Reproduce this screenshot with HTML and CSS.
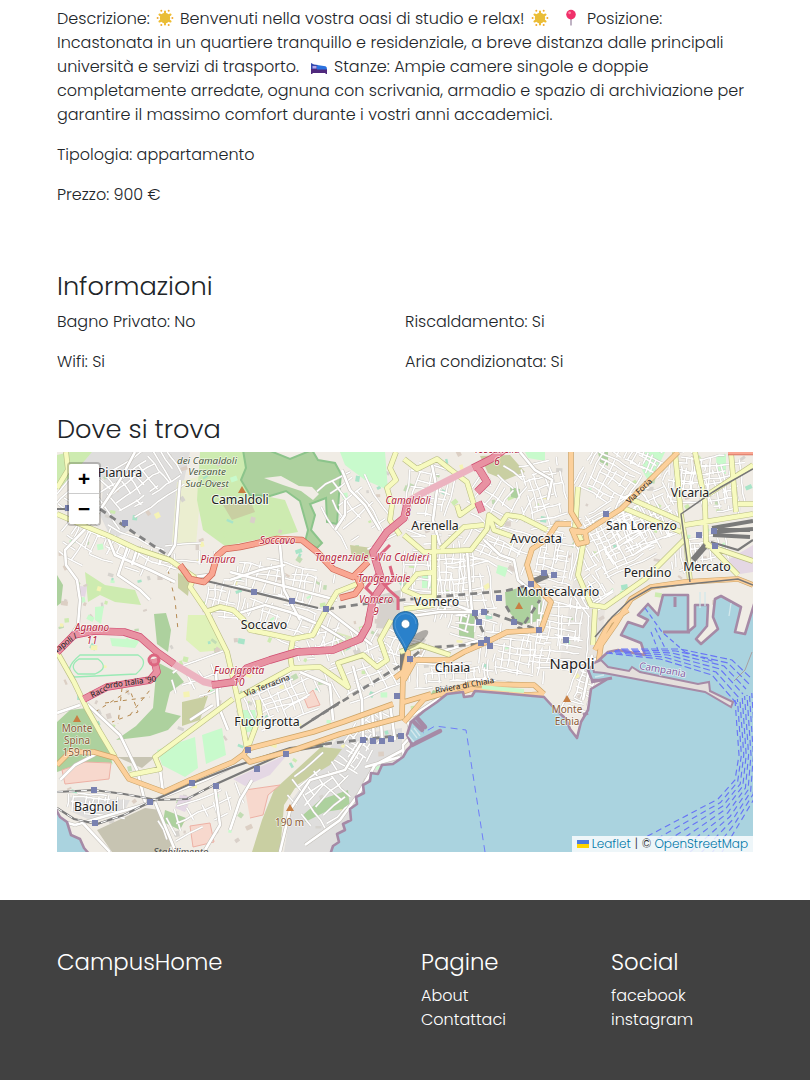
FILE: index.html
```
<!DOCTYPE html>
<html lang="it">
<head>
<meta charset="utf-8">
<title>CampusHome</title>
<link rel="stylesheet" href="styles.css">
</head>
<body>
<svg class="defs" width="0" height="0" aria-hidden="true">
  <symbol id="star" viewBox="0 0 18 18">
    <g stroke="#efbd32" stroke-width="2.1" stroke-linecap="round"><path d="M9 2.500v13M3.500 5.500l11 7M3.500 12.500l11-7"/></g>
    <g fill="#f0a92e"><circle cx="5.3" cy="1.8" r="1"/><circle cx="12.7" cy="1.8" r="1"/><circle cx="16.4" cy="9" r="1"/><circle cx="12.7" cy="16" r="1"/><circle cx="5.3" cy="16" r="1"/><circle cx="1.600" cy="9" r="1"/></g>
    <circle cx="9" cy="9" r="5.200" fill="#e9bd37"/>
  </symbol>
  <symbol id="pin" viewBox="0 0 18 18">
    <path d="M9 9v7.6" stroke="#9d8aa5" stroke-width="1.3"/><circle cx="9" cy="5.6" r="4.8" fill="#f0306a"/><circle cx="7.6" cy="3.8" r="1.4" fill="#ff85a5"/>
  </symbol>
  <symbol id="bed" viewBox="0 0 18 18">
    <path d="M1 6v11h1.5v-1h13v1H17v-5H1z" fill="#50297d"/><path d="M1 6l3 1.5L8 8v4H1z" fill="#3448ae"/><path d="M2.5 9h4v2.500h-4z" fill="#b9a9e8"/><path d="M7 8l8.500 1.200q1.500.3 1.500 3.300H7z" fill="#2b72df"/>
  </symbol>
</svg>
<main class="page">
  <section class="intro">
    <p class="text">
      <span class="line"><span class="t1">Descrizione:</span><svg class="emoji e1"><use href="#star"/></svg><span class="t2">Benvenuti nella vostra oasi di studio e relax!</span><svg class="emoji e2"><use href="#star"/></svg><svg class="emoji e3"><use href="#pin"/></svg><span>Posizione:</span></span>
      <span class="line">Incastonata in un quartiere tranquillo e residenziale, a breve distanza dalle principali</span>
      <span class="line"><span class="t5">università e servizi di trasporto.</span><svg class="emoji e4"><use href="#bed"/></svg><span>Stanze: Ampie camere singole e doppie</span></span>
      <span class="line">completamente arredate, ognuna con scrivania, armadio e spazio di archiviazione per</span>
      <span class="line">garantire il massimo comfort durante i vostri anni accademici.</span>
    </p>
    <p class="text">Tipologia: appartamento</p>
    <p class="text">Prezzo: 900 €</p>
  </section>
  <section class="info">
    <h3 class="title">Informazioni</h3>
    <div class="grid">
      <p class="text">Bagno Privato: No</p><p class="text">Riscaldamento: Si</p>
      <p class="text">Wifi: Si</p><p class="text">Aria condizionata: Si</p>
    </div>
  </section>
  <section>
    <h3 class="title where">Dove si trova</h3>
    <div class="map">
      <svg class="canvas" viewBox="57 452 696 400" width="696" height="400">
        <rect x="57" y="452" width="696" height="400" fill="#f0ece5"/>
        <!-- land use -->
        <g fill="#dfdedd">
          <path d="M92 452H190L180 500L170 556L130 530L112 540L100 515L104 480L80 462Z"/>
          <path d="M338 737L402 728V758L372 776L345 830L332 852H284L292 800Z"/>
          <path d="M68 797L130 800L124 812L95 822L72 812Z"/>
          <path d="M575 570L605 610L600 660L585 690L560 660Z" fill="#e8e4df"/>
          <path d="M380 595L400 590V630L376 628Z" fill="#d6d2cd"/>
        </g>
        <path fill="#ebeed0" d="M177 482L202 476L196 545L172 542Z"/>
        <path fill="#cdebb0" d="M200 452H245L250 493L285 500L298 532L275 536L225 546L203 530L197 500ZM85 572L105 585L135 590L141 605L115 602L100 595L88 602ZM57 455L70 452L92 452L68 480L57 490Z"/>
        <path fill="#dff2b9" d="M188 615L212 615L225 650L200 652L186 640Z"/>
        <g id="patches"></g>
        <g fill="#add19e">
          <path stroke="#8cc48b" stroke-width="2" d="M243 450L246 468L241 480L250 495L270 496L286 491L300 501L303 512L308 530L305 542L317 548L322 543L311 530L315 515L310 504L326 498L327 522L337 524L339 495L341 474L335 463L318 460L312 450L290 459L268 450Z"/>
          <path fill="#f0ece5" d="M264 478L281 476L299 486L312 487L319 494L313 500L301 491L283 485Z"/>
          <path d="M57 575L63 585L61 603L57 606ZM154 614L166 613L171 630L168 652L157 644ZM57 722L70 710L87 708L110 750L112 763L88 762L57 772ZM157 662L176 672L184 682L170 692L165 712L181 716L168 730L150 736L116 740L136 726L153 708ZM459 615L475 611L474 640L459 638ZM505 592L525 586L541 595L543 620L520 625L506 608ZM510 487L520 489L519 499L511 497ZM433 690L440 692L437 699L428 700ZM303 815L320 800L348 790L350 808L325 812L305 822ZM165 810L186 818L180 830L163 822ZM598 452H608V466L600 462Z"/>
        </g>
        <path fill="none" stroke="#b58a52" stroke-width="1" stroke-dasharray="4 5" d="M95 712L130 690L138 712L112 722M105 703L150 697M122 688L118 724M130 715L150 690M168 570L175 600L178 630M185 720L210 690"/>
        <path fill="#c9cfa2" d="M350 545L372 548L368 562L352 560ZM480 456L510 455L525 472L505 480L488 473ZM223 505L250 500L255 512L232 520ZM178 573L190 580L188 596L178 588ZM321 747L342 749L330 765L297 785L284 805L280 852H252L262 820L274 790ZM182 702L208 696L200 720L182 726Z"/>
        <path fill="#c8facc" d="M340 452H385L388 490L365 480L345 465ZM157 750L195 737L198 768L185 777L162 765ZM202 735L222 728L226 755L206 764ZM645 452L665 452L650 484L642 470ZM716 456L726 454L726 474L717 472ZM525 452H545V461L528 458ZM498 565L508 568L505 577L496 573ZM422 575H432V588H422ZM95 607L104 606L101 624L95 620ZM110 638L140 640L135 648L112 646ZM242 710L255 710L258 730L243 733Z"/>
        <path fill="none" stroke="#9aeab5" stroke-width="1.300" d="M80 655H138Q150 662 136 674L75 677Q62 670 80 655ZM79 659H98Q110 668 95 674H78Q68 666 79 659Z"/>
        <path fill="#f7d8cd" stroke="#edb1a5" d="M62 770L85 762L111 763L109 779L65 784ZM190 826L210 823L214 842L193 847ZM304 698L313 690L320 705L308 708ZM245 790L280 785L268 795L263 815L250 818"/>
        <path fill="#c7c4b2" d="M97 830L145 808L160 810L172 845L165 852H112ZM117 757L155 757L142 768Z"/>
        <path fill="#e4d7e4" d="M233 779L288 754L270 775L245 786ZM728 560L753 545V572L740 574ZM80 586L87 587L85 597L79 595ZM180 795L192 797L185 812L175 808Z"/>
        <path fill="#dce9bf" d="M330 630L356 638L342 655Z"/>
        <g id="streetCase" fill="none" stroke="#c6c3be" stroke-width="2.400"></g>
        <g id="streetFill" fill="none" stroke="#fff" stroke-width="1.600"></g>
        <!-- local roads -->
        <g fill="none" stroke="#c4c0ba" stroke-width="3.800" stroke-linejoin="round"><path id="loc" d="M87 527L65 550L66 565L77 580L80 600L78 625L68 640M87 527L100 510L120 480L135 452M107 535L115 555L150 570L175 582M128 546L118 575L140 590L150 600M137 549L132 565M166 560L175 545L180 480M194 577L215 574M280 545L284 590L300 620M285 565L260 570L230 580M230 572L337 600M233 615L265 605L290 612L320 625L345 640M327 610L372 645M432 465L437 490L433 520L440 545M467 550L472 612M484 540L500 555L514 560L518 580L530 590M450 603L474 612M404 617L440 612L478 612M480 640L440 652M216 673L218 705L228 730M213 705L190 720M300 672L330 685L333 720M353 666L362 700L363 740L345 770L310 780L290 810L280 852M403 750L375 765L358 795L340 820L305 845M400 757L365 767M390 705L395 740M380 707L382 737M372 710L374 738M57 713L80 705M87 704L120 735L137 770L145 802M75 825L140 806L207 779L235 765M80 820L110 852M155 802L175 850M160 769L163 792M215 788L220 825L205 850M57 820L75 825M100 752L75 765L60 780M252 780L240 800L230 830M575 665L610 655M592 655L583 700M404 765L403 745L412 735L408 722M435 712L410 728M441 697L412 716M342 470L350 490L365 505L380 530M345 500V515L335 530M520 452L535 470L552 480L548 500"/></g>
        <use href="#loc" fill="none" stroke="#fff" stroke-width="2.600"/>
        <!-- railways -->
        <g fill="none" stroke="#7a7a7a" stroke-width="2.200"><path d="M57 792L94 790L124 794L157 800L187 799L214 785L287 752L323 746M57 808L74 819L97 824L124 815L150 802L190 784L233 767L290 748L325 744M194 578L253 592L293 602L318 608M300 728L340 702M753 540L738 550L711 542M57 509H70"/><path stroke-width="6" d="M706 545L693 560M530 583L548 575M403 652V675"/><path d="M712 528L753 521M713 532L753 529M713 535L750 537M718 530H750" stroke-width="4"/></g>
        <g fill="none" stroke="#828282" stroke-width="2.800" stroke-dasharray="7 5"><path d="M100 509L130 530L170 557M327 609L370 603L434 597L505 591L530 585M325 744L403 735M312 720L406 662L424 648L481 644M482 610L510 620L539 630M475 615L487 640M506 606L520 630L540 600"/></g>
        <path fill="none" stroke="#fff" stroke-dasharray="6 6" d="M57 792L94 790L124 794L157 800L187 799L214 785M57 808L74 819L97 824L124 815L150 802"/>
        <!-- secondary roads -->
        <g fill="none" stroke="#b9bd84" stroke-width="5.600" stroke-linejoin="round"><path id="sec" d="M57 514L87 527L107 535L137 549L170 560L194 577L190 587L207 612L227 652L238 700L247 749M205 612L220 607L233 610L243 619L250 630L270 634L293 639L313 635L325 612L337 592L357 584L365 580M293 639L290 655L292 668M404 459L417 469L437 459L451 470L467 482L474 505L460 515L457 505M404 535L424 552L471 550L487 529L489 515L501 524L507 515L521 517L547 530M489 515L494 530L514 537M441 549L464 527L484 525M434 535V597L420 597L404 590L417 574L434 572M396 452L390 468L396 480L387 488L392 505L390 520L400 535M57 652L74 682L87 709L100 732L115 757M233 699L155 757L160 769L130 775M237 698L292 668L320 667L337 679L348 687L338 663L363 655L377 667L387 660L380 640L391 620M404 609L434 605M577 530L583 545L578 575L591 605L605 607L645 579L685 539L681 515L675 452M631 499L681 521M621 507L681 532M695 452L705 502L706 542L738 575M685 525L753 514M701 499L753 465M731 452L736 512M686 539L690 582M738 504H753M706 545L753 561M595 609L593 645M57 488L68 470L66 452M247 750L260 715L258 700M400 652L420 645L450 655M578 487L575 530"/></g>
        <use href="#sec" fill="none" stroke="#f7fabf" stroke-width="4.400" stroke-linejoin="round"/>
        <!-- primary roads -->
        <g fill="none" stroke="#cba468" stroke-width="5.600" stroke-linejoin="round"><path id="pri" d="M57 765L70 752L94 752L115 758L129 779L164 792L190 780L233 762L244 754L247 749L313 732L343 722L393 704M244 756L250 762L297 749L340 734L377 724L403 717M395 678L408 668V652L403 675L402 718M571 452V512L580 527M571 524L557 524L547 539L532 549L527 565L532 582L551 602L541 630L507 632L487 642L464 652L450 660L415 660L404 680M678 452L658 472L621 509L585 532H572M598 665L601 645L615 625L631 599L651 587L685 582L738 579L753 585M595 650L610 622L628 610M404 722L424 699L441 694L471 684L534 685L544 694M441 699L471 689L527 695L544 694M404 702L431 694M572 530L585 532L587 542L578 544Z"/></g>
        <use href="#pri" fill="none" stroke="#fcd09b" stroke-width="4.300" stroke-linejoin="round"/>
        <path d="M482 687L524 691" stroke="#c8facc" stroke-width="4"/>
        <!-- trunk roads and motorways -->
        <g fill="none" stroke="#cf6655" stroke-width="6.600" stroke-linejoin="round"><path id="tru" d="M180 565L190 579L204 582L212 574L217 556L225 549L240 547L277 539L302 540L317 552L333 569L353 577L368 562M357 577L361 586L355 594L340 598M728 452H753"/></g>
        <use href="#tru" fill="none" stroke="#f9a692" stroke-width="5.200"/>
        <path fill="none" stroke="#ecb3c0" stroke-width="7" d="M402 505L421 494L474 467M174 664L204 682L218 685"/>
        <g fill="none" stroke="#cf4b70" stroke-width="7.600" stroke-linejoin="round"><path id="mot" d="M57 652L74 635L94 631L124 632L140 637L157 652L174 664M212 685L233 682L247 668L270 660L297 652L333 650L360 639L368 625L373 599L383 585L377 565L373 552L387 532L404 518L408 500M84 699L107 687L150 680L157 672L154 659M473 468L491 459L504 450M476 464L487 482L477 492M478 502L482 512"/></g>
        <use href="#mot" fill="none" stroke="#e892a2" stroke-width="6.300" stroke-linejoin="round"/>
        <g fill="none" stroke="#dc6680" stroke-width="3"><path d="M373 595L366 588L376 575L389 590L398 598L398 610M384 586L394 580L390 566M375 560L390 545"/><circle cx="154" cy="660" r="5"/></g>
        <!-- sea -->
        <g fill="#aad3df" stroke="#a68aa6" stroke-width="2.600" stroke-linejoin="round">
          <path d="M54 806L60 817L67 822L71 835L80 839L84 848L90 855H54Z"/>
          <path d="M330 855L333 846L339 842L337 834L345 830L343 824L351 820L350 809L357 804L356 797L364 793L363 785L370 781L371 773L378 774L382 765L393 764L403 757L407 750L412 745L407 735L411 722L424 711L437 702L447 694L463 692L464 697L472 696L475 691L500 693L544 697L554 708L566 719L570 729L577 738L581 722L588 710L591 689L606 680L592 680L588 670L608 652L618 650L645 655L641 643L621 635L628 622L643 627L648 620L638 615L648 604L658 615L663 595H688V632L695 626V605H708L707 626L696 639L701 644L718 629L713 617L715 599L721 596L741 607L735 632L745 634L756 598V855Z"/>
        </g>
        <path fill="#e5dfdc" stroke="#a68aa6" stroke-width="2" d="M592 664L601 660L608 667L629 671L632 667L640 672L698 684L709 682L710 691L733 702L731 707L705 692L604 673L594 672Z"/>
        <path fill="none" stroke="#a68aa6" stroke-width="4.500" stroke-linecap="round" d="M412 745L440 731M414 722L422 730M418 719L425 727"/>
        <path fill="none" stroke="#a68aa6" stroke-width="3" d="M675 597V607M663 632H690M591 682L612 678M583 715L588 713"/>
        <path fill="none" stroke="#d3e8ec" stroke-width="1.300" d="M411 730L417 738M414 728L420 736M408 735L414 742M700 592V608M705 592V606M731 603L729 616M595 677L604 675"/>
        <path fill="none" stroke="#6f7dfa" stroke-width="1" stroke-dasharray="7 5" d="M485 852L466 730L435 726L423 733"/>
        <g id="ferries" fill="none" stroke="#6875f5" stroke-width="1.150"></g>
        <path fill="none" stroke="#777" stroke-width="1.500" d="M753 469L721 487L713 492L681 514L690 582M595 637L612 617L630 600L651 588L738 579L753 585"/>
        <path fill="none" stroke="#a8a0a0" d="M734 681L745 670L752 652"/>
        <g id="stations" fill="#7981b0"></g>
        <path fill="#c77f43" d="M242 486l4 7h-8ZM77 715l4 7h-8ZM290 804l4 7h-8ZM519 602l4 7h-8ZM567 695l4 7h-8Z"/>
        <!-- labels -->
        <g class="lab">
          <g class="place">
            <text x="120" y="477">Pianura</text><text x="240" y="504">Camaldoli</text><text x="435" y="530">Arenella</text><text x="536" y="543">Avvocata</text><text x="690" y="497">Vicaria</text><text x="641.500" y="530">San Lorenzo</text><text x="647.500" y="577">Pendino</text><text x="707" y="571">Mercato</text><text x="558" y="596">Montecalvario</text><text x="436.500" y="606">Vomero</text><text x="264" y="629">Soccavo</text><text x="452.500" y="672">Chiaia</text><text x="267" y="726">Fuorigrotta</text><text x="96" y="811">Bagnoli</text><text class="city" x="572" y="669">Napoli</text>
          </g>
          <g class="hill"><text x="207" y="463.500">dei Camaldoli</text><text x="207" y="475">Versante</text><text x="207" y="487">Sud-Ovest</text></g>
          <g class="exit"><text x="408" y="504">Camaldoli</text><text x="408" y="516">8</text><text x="372" y="561" textLength="114">Tangenziale - Via Caldieri</text><text x="384" y="582">Tangenziale</text><text x="376" y="603">Vomero</text><text x="376" y="615">9</text><text x="277.500" y="544">Soccavo</text><text x="218" y="563">Pianura</text><text x="92" y="631">Agnano</text><text x="92" y="643.500">11</text><text x="239" y="674">Fuorigrotta</text><text x="239" y="686">10</text><text x="497" y="453">Toscanella</text><text x="497" y="465">6</text></g>
          <g class="peak"><text x="77" y="732">Monte</text><text x="77" y="744">Spina</text><text x="77" y="756">159 m</text><text x="289.500" y="826">190 m</text><text x="567" y="713">Monte</text><text x="567" y="725">Echia</text></g>
          <g class="road"><text transform="translate(100 694) rotate(-27)">Racc</text><text transform="translate(131 685) rotate(-8)">ordo Italia '90</text><text transform="translate(268 688) rotate(-21)">Via Terracina</text><text transform="translate(66 646) rotate(-37)">Napoli /</text><text transform="translate(641 493) rotate(-44)">Via Foria</text><text transform="translate(465 688) rotate(-10)">Riviera di Chiaia</text></g>
          <text class="port" transform="translate(662 673) rotate(10)">Campania</text>
          <text class="works" x="181" y="855">Stabilimento</text>
        </g>
        <!-- marker -->
        <ellipse cx="416" cy="640" rx="15" ry="5" transform="rotate(-38 416 640)" fill="#000" opacity=".28"/>
        <path d="M405.500 652C403 643 393 634 393 624A12.500 12.500 0 0 1 418 624C418 634 408 643 405.500 652Z" fill="#2a81cb" stroke="#2e6c97"/>
        <path d="M405.500 647C403 639 395 632 395 624A10.500 10.500 0 0 1 416 624" fill="none" stroke="#5b9fd5" opacity=".7"/>
        <circle cx="405.500" cy="624" r="4.400" fill="#fff" stroke="#2e6c97" stroke-width=".7"/>
      </svg>
      <div class="zoom"><a class="zbtn">+</a><a class="zbtn">−</a></div>
      <div class="credit"><svg class="flag" viewBox="0 0 12 8" width="12" height="8"><path fill="#4C7BE1" d="M0 0h12v4H0z"/><path fill="#FFD500" d="M0 4h12v4H0z"/></svg><a>Leaflet</a><span class="sep">|</span><span class="copy">©</span><a>OpenStreetMap</a></div>
    </div>
  </section>
</main>
<footer class="footer">
  <div class="brand"><h4 class="ftitle">CampusHome</h4></div>
  <div class="col"><h4 class="ftitle">Pagine</h4><a>About</a><a>Contattaci</a></div>
  <div class="col"><h4 class="ftitle">Social</h4><a>facebook</a><a>instagram</a></div>
</footer>
<script src="map.js"></script>
</body>
</html>
```
FILE: styles.css
```
*{box-sizing:border-box}
body{margin:0;background:#fff;color:#212529;font-family:Poppins,Inter,"Open Sans",sans-serif;font-weight:300;font-size:16px;line-height:24px}
.defs{position:absolute}
.page{padding:7px 57px 48px;height:900px}
.text{margin:0 0 16px;white-space:nowrap}
.line{display:flex;height:24px;white-space:nowrap}
.emoji{width:18px;height:18px;flex:none}
.e1{margin:2px 6px 0 5px}.e2{margin:2px 0 0 5px}.e3{margin:2px 7px 0 13px}.e4{margin:2px 6px 0 10px}
.t1{width:94px}.t2{width:346px}.t5{width:243px}
.intro{height:264px}
.info{height:143px}
.title{margin:0;height:39px;font-size:25.66px;font-weight:300;line-height:31px;white-space:nowrap}
.where{height:38px}
.grid{display:grid;grid-template-columns:1fr 1fr}
.map{position:relative;width:696px;height:400px;overflow:hidden;background:#ddd}
.canvas{display:block}
.lab{font-family:"Noto Sans",sans-serif;font-weight:400;text-anchor:middle;stroke-linejoin:round}
.lab text{paint-order:stroke}
.place{font-size:12.3px;fill:#222;stroke:#fff;stroke-opacity:.75;stroke-width:2px}
.city{font-size:14.7px}
.hill{font-size:9.8px;font-style:italic;fill:#4d5a42;stroke:#fff;stroke-opacity:.6;stroke-width:1.5px}
.exit{font-size:10px;font-style:italic;fill:#b5243c;stroke:#fff;stroke-opacity:.75;stroke-width:1.5px}
.peak{font-size:10px;fill:#8a5a36;stroke:#fff;stroke-opacity:.65;stroke-width:1.5px}
.road{font-size:8px;fill:#222}
.port{font-size:10px;fill:#8461a4;stroke:#fff;stroke-opacity:.7;stroke-width:1.5px}
.works{font-size:9.8px;font-style:italic;fill:#444}
.zoom{position:absolute;left:10px;top:10px;width:34px;border:2px solid rgba(0,0,0,.2);border-radius:4px;background-clip:padding-box}
.zbtn{display:block;height:30px;background:#fff;color:#000;text-align:center;font:bold 21px/34px "Liberation Mono",monospace}
.zbtn:first-child{border-bottom:1px solid #ccc;border-radius:2px 2px 0 0}
.zbtn:last-child{border-radius:0 0 2px 2px}
.credit{position:absolute;right:0;bottom:0;height:16px;padding:0 5px;display:flex;align-items:center;background:rgba(255,255,255,.8);color:#333;font-size:12px;line-height:16px;white-space:nowrap}
.credit a{color:#0078a8}
.flag{margin-right:3px;flex:none}
.sep{margin:0 4px}.copy{margin-right:3px}
.footer{display:flex;height:180px;padding:48px 0 0 57px;background:#414141;color:#fff}
.brand{width:364px}
.col{width:190px;display:flex;flex-direction:column}
.ftitle{margin:0 0 8px;font-size:22.83px;font-weight:300;line-height:28px}
```
FILE: map.js
```
// Minor streets, ferry lanes and stations of the city map
let seed = 7;
const rnd = () => (seed = (seed * 16807) % 2147483647) / 2147483647;
const byId = id => document.getElementById(id);

// centre x, centre y, half width, half height, rotation in degrees, spacing
const districts = [
  [140,485,42,28,-35,8],[130,555,60,18,25,12],[85,545,25,25,30,12],[285,585,50,22,12,9],[290,622,50,22,20,9],
  [230,605,24,24,8,8],[285,700,48,22,-22,8],[190,560,30,14,0,13],[98,806,30,12,3,5],[205,815,45,20,-25,11],
  [370,675,38,22,-25,9],[365,740,34,16,-55,6],[325,790,32,30,-40,11],[440,575,36,38,2,7],[430,500,26,34,12,8],
  [470,590,28,30,-8,8],[500,500,30,30,35,9],[545,495,24,34,-15,7],[500,550,34,20,24,8],[555,560,24,28,10,6],
  [560,630,30,40,5,6],[610,480,30,28,30,7],[620,535,42,34,-28,6],[645,520,35,30,-25,6],[690,480,22,28,4,5],
  [725,490,26,32,-8,6],[700,555,30,18,-8,7],[595,590,22,20,-35,6],[455,675,45,14,-4,6],[515,660,35,24,8,6],
  [585,690,14,26,20,5],[360,510,30,40,-35,12],[85,500,26,26,40,9],[205,680,30,20,-25,13],[400,650,28,16,20,8],
  [330,650,40,16,-15,9],[640,460,30,14,25,6],[470,625,35,16,14,7]
];
let streets = '';
for (const [cx, cy, hw, hh, deg, gap] of districts) {
  const a = deg * Math.PI / 180, c = Math.cos(a), s = Math.sin(a);
  const at = (u, v) => (cx + u * c - v * s).toFixed(1) + ' ' + (cy + u * s + v * c).toFixed(1);
  for (let dir = 0; dir < 2; dir++) {
    const A = dir ? hh : hw, B = dir ? hw : hh;
    for (let v = -B; v < B; v += gap * (0.65 + rnd() * 0.8)) {
      let u = -A * (0.4 + rnd() * 0.6), w = v, pen = 'M';
      const end = A * (0.4 + rnd() * 0.6);
      while (u < end) {
        streets += pen + (dir ? at(w, u) : at(u, w));
        pen = rnd() < 0.12 ? 'M' : 'L';
        u += gap * (0.8 + rnd() * 0.7);
        w += (rnd() - 0.5) * gap * 0.4;
      }
    }
  }
}
for (const id of ['streetCase', 'streetFill']) byId(id).innerHTML = '<path d="' + streets + '"/>';

// small parks, schools and buildings
const tints = ['#c8facc', '#f5f3b4', '#c2dcb4', '#d9d0c9', '#a8e4c8', '#dccfc4', '#cdebb0', '#d6d3ce'];
let patches = '';
for (let i = 0; i < 420; i++) {
  const x = 57 + rnd() * 696, y = 452 + rnd() * 390, w = 2 + rnd() * 5, h = 2 + rnd() * 4;
  patches += `<rect x="${x.toFixed(1)}" y="${y.toFixed(1)}" width="${w.toFixed(1)}" height="${h.toFixed(1)}" fill="${tints[i % 8]}" transform="rotate(${(rnd() * 80 - 40) | 0} ${x | 0} ${y | 0})"/>`;
}
byId('patches').innerHTML = patches;

// ferry lanes fan out along the eastern edge of the bay
let lanes = '';
for (let i = 0; i < 9; i++) {
  const k = i * 4;
  if (i < 6) lanes += `<path stroke-dasharray="7 3" stroke-dashoffset="${i * 4}" d="M${606 + i * 3} ${653 - i * 0.8}L${660 + k} ${659 - i * 2}L${712 + k} ${675 - i * 3}L${737 + i * 3} ${704 - i * 5}"/>`;
  lanes += `<path stroke-dasharray="6 4" stroke-dashoffset="${i * 3}" d="M${735 + i * 2.4} ${700 - i}L${739 + i * 2.4} 755L${735 + i * 2.6} ${780 + i * 2}L${718 + i * 2.4} ${799 + i * 3.5}L${644 + i * 9} ${838 + i * 3}"/>`;
}
lanes += '<path stroke-dasharray="5 3" d="M645 608L662 632L685 652M651 632L658 650M655 628L665 648M685 652L715 662"/>';
byId('ferries').innerHTML = lanes;

byId('stations').innerHTML = [
  [68,508],[125,523],[254,592],[292,601],[326,609],[606,514],[699,535],[714,531],[715,546],[544,573],[554,575],[531,584],
  [499,598],[484,612],[475,613],[479,622],[514,622],[539,630],[566,640],[481,643],[487,640],[490,646],[410,659],[397,696],
  [94,790],[95,823],[150,802],[192,783],[216,786],[248,750],[286,754],[257,769],[363,740],[373,741],[382,741],[391,739],[401,736]
].map(([x, y]) => `<rect x="${x - 3}" y="${y - 3}" width="6" height="6"/>`).join('');
```
